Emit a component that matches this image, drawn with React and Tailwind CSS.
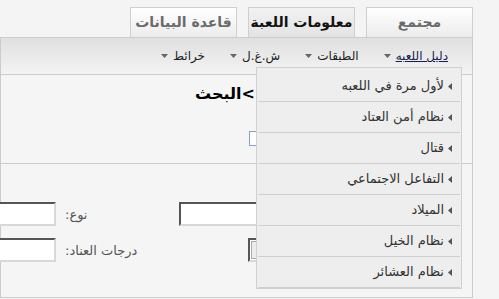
import React from 'react';

const tabs = [
  { label: 'مجتمع', active: false },
  { label: 'معلومات اللعبة', active: true },
  { label: 'قاعدة البيانات', active: false },
];

const navItems = ['دليل اللعبه', 'الطبقات', 'ش.غ.ل', 'خرائط'];

const menuItems = [
  'لأول مرة في اللعبه',
  'نظام أمن العتاد',
  'قتال',
  'التفاعل الاجتماعي',
  'الميلاد',
  'نظام الخيل',
  'نظام العشائر',
];

const Input = ({ className = '' }) => (
  <div className={`h-[24px] bg-white border-2 border-t-[#555] border-l-[#555] border-r-[#d8d8d8] border-b-[#d8d8d8] ${className}`} />
);

const App = () => {
  return (
    <div className="relative w-[499px] h-[299px] overflow-hidden bg-[#f4f4f4] font-['DejaVu_Sans',sans-serif]">
      <div className="w-[473px]">
        {/* tabs */}
        <div dir="rtl" className="h-[37px] pt-[7px] flex items-end gap-[11px]">
          {tabs.map(t => (
            <div
              key={t.label}
              className={`w-[107px] h-[30px] flex items-center justify-center border border-b-0 border-[#cfcfcf] text-[14px] font-bold ${
                t.active
                  ? 'bg-gradient-to-b from-[#f2f2f2] to-[#e3e3e3] text-[#111]'
                  : 'bg-gradient-to-b from-white to-[#ececec] text-[#6a6a6a]'
              }`}
            >
              {t.label}
            </div>
          ))}
        </div>

        {/* nav bar */}
        <div dir="rtl" className="h-[38px] border border-[#cccccc] bg-gradient-to-b from-[#e0e0e0] to-[#f3f3f3] flex items-center pr-[24px] gap-[25px]">
          {navItems.map((n, i) => (
            <div key={n} className="flex items-center gap-[5px] text-[12px]">
              <span className={i === 0 ? 'text-[#1c1c50] underline' : 'text-[#222]'}>{n}</span>
              <svg width="7" height="4" viewBox="0 0 7 4"><path d="M0 0h7L3.5 4z" fill="#666" /></svg>
            </div>
          ))}
        </div>

        {/* content */}
        <div dir="rtl" className="h-[223px] border border-t-0 border-[#cccccc] bg-[#f5f5f5]">
          <div className="pt-[9px] pr-[217px] text-[16px] font-bold text-black leading-[20px]">&gt;البحث</div>
          <div className="mt-[27px] pr-[209px] flex">
            <div className="w-[14px] h-[15px] border border-[#8aa0c0] bg-white" />
          </div>
          <div className="mt-[17px] border-b border-[#cccccc]" />

          <div dir="ltr" className="mt-[38px] flex items-start">
            <Input className="w-[80px] -ml-[25px]" />
            <div dir="rtl" className="ml-[9px] w-[106px] pt-[3px] text-left text-[13px] text-[#555]">نوع:</div>
            <Input className="ml-[8px] w-[140px]" />
          </div>
          <div dir="ltr" className="mt-[12px] flex items-start">
            <Input className="w-[80px] -ml-[25px]" />
            <div dir="rtl" className="ml-[9px] w-[174px] pt-[3px] text-left text-[13px] text-[#555]">درجات العناد:</div>
            <div className="ml-[9px] h-[24px] w-[80px] bg-white border-2 border-t-[#555] border-l-[#555] border-r-[#d8d8d8] border-b-[#d8d8d8] p-[1px]">
              <div className="h-full w-[14px] border border-[#aaa] bg-[#ececec]" />
            </div>
          </div>
        </div>
      </div>

      {/* dropdown menu */}
      <div dir="rtl" className="absolute left-[256px] top-[67px] w-[206px] h-[222px] border border-[#d0d0d0] bg-[#eeeeee] pt-[3px] px-[1px]">
        {menuItems.map(m => (
          <div key={m} className="h-[31px] border-b border-[#cfcfcf] flex items-center pr-[8px] gap-[4px] text-[13px] text-[#333]">
            <svg width="4" height="7" viewBox="0 0 4 7"><path d="M4 0v7L0 3.5z" fill="#555" /></svg>
            <span>{m}</span>
          </div>
        ))}
      </div>
    </div>
  );
};

export default App;
